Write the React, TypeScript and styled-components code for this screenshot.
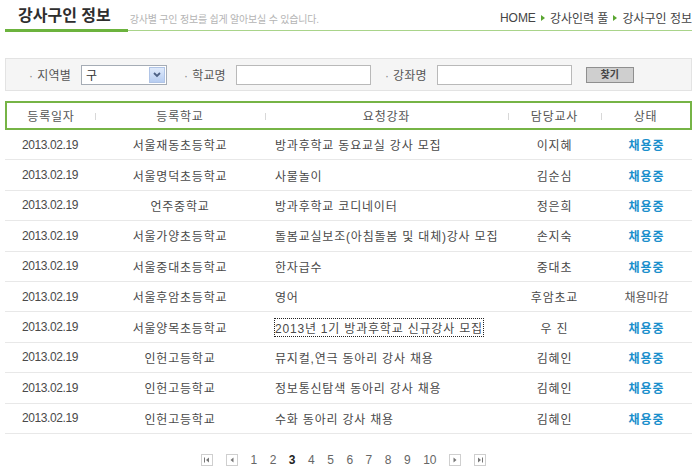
import React from 'react';
import styled, { createGlobalStyle } from 'styled-components';

const GlobalStyle = createGlobalStyle`
  body {
    margin: 0;
    background: #fff;
    font-family: "Liberation Sans", "Noto Sans CJK KR", sans-serif;
    font-size: 12px;
    color: #555;
  }
`;

const Page = styled.div`
  width: 700px;
  padding: 0 8px 0 5px;
  box-sizing: border-box;
`;

// Title bar with green underline
const Header = styled.div`
  display: flex;
  align-items: flex-end;
  height: 30px;
  border-bottom: 1px solid #a9d48a;
`;

const Title = styled.h1`
  margin: 0 0 -2px 0;
  padding: 0 17px 3px 13px;
  font-size: 16px;
  font-weight: bold;
  color: #2e2e2e;
  border-bottom: 3px solid #6cb33e;
  line-height: 20px;
`;

const SubTitle = styled.span`
  margin-left: 2px;
  padding-bottom: 4px;
  font-size: 10px;
  color: #b4b4b4;
  letter-spacing: -0.2px;
`;

const Breadcrumb = styled.div`
  margin-left: auto;
  align-self: flex-start;
  margin-top: 9px;
  display: flex;
  align-items: center;
  gap: 5px;
  color: #444;
  font-size: 12px;
`;

const Arrow = styled.span`
  width: 0;
  height: 0;
  border-top: 3px solid transparent;
  border-bottom: 3px solid transparent;
  border-left: 4px solid #5aa631;
`;

// search area
const SearchBox = styled.div`
  margin-top: 27px;
  height: 33px;
  display: flex;
  align-items: center;
  background: #f5f5f5;
  border: 1px solid #e3e3e3;
  box-sizing: border-box;
  padding-left: 23px;
`;

const Label = styled.span<{ $ml?: number }>`
  margin-left: ${(p) => p.$ml ?? 0}px;
  margin-right: 10px;
  color: #555;
  white-space: nowrap;
  letter-spacing: 0.2px;
  &::before {
    content: '·';
    margin-right: 4px;
    color: #888;
  }
`;

const FakeSelect = styled.div`
  width: 86px;
  height: 20px;
  box-sizing: border-box;
  border: 1px solid #a5acb5;
  background: #fff;
  display: flex;
  align-items: center;
  justify-content: space-between;
  padding-left: 4px;
  color: #333;
`;

const SelectBtn = styled.div`
  width: 16px;
  height: 16px;
  margin-right: 1px;
  background: linear-gradient(#dfeafb, #b7cdf1);
  border: 1px solid #b0c4e6;
  box-sizing: border-box;
  display: flex;
  align-items: center;
  justify-content: center;
`;

const TextInput = styled.input<{ $w: number }>`
  width: ${(p) => p.$w}px;
  height: 20px;
  box-sizing: border-box;
  border: 1px solid #b9b9b9;
  background: #fff;
  padding: 0 3px;
`;

const SearchButton = styled.button`
  margin-left: 14px;
  width: 48px;
  height: 16px;
  padding: 0;
  box-sizing: border-box;
  background: #cfcfcf;
  border: 1px solid #8f8f8f;
  font-family: inherit;
  font-size: 10px;
  font-weight: bold;
  color: #444;
  line-height: 14px;
`;

// table
const Grid = styled.div`
  display: grid;
  grid-template-columns: 90px 170px 243px 93px 1fr;
  margin-top: 10px;
`;

const HeadRow = styled.div`
  display: contents;
`;

const HeadCell = styled.div<{ $first?: boolean; $last?: boolean }>`
  position: relative;
  height: 29px;
  box-sizing: border-box;
  display: flex;
  align-items: center;
  justify-content: center;
  border-top: 2px solid #76b446;
  border-bottom: 2px solid #76b446;
  border-left: ${(p) => (p.$first ? '2px solid #76b446' : 'none')};
  border-right: ${(p) => (p.$last ? '2px solid #76b446' : 'none')};
  color: #555;
  font-size: 12px;
  letter-spacing: 0.8px;
  &::before {
    content: ${(p) => (p.$first ? 'none' : "''")};
    position: absolute;
    left: 0;
    top: 10px;
    width: 1px;
    height: 7px;
    background: #d8d8d8;
  }
`;

const Cell = styled.div<{ $align?: string; $pl?: number; $num?: boolean }>`
  height: 30.4px;
  box-sizing: border-box;
  border-bottom: 1px solid #e8e8e8;
  display: flex;
  align-items: center;
  justify-content: ${(p) => p.$align ?? 'center'};
  padding-left: ${(p) => p.$pl ?? 0}px;
  color: #4a4a4a;
  white-space: nowrap;
  letter-spacing: ${(p) => (p.$num ? '-0.4px' : '0.8px')};
`;

const Focused = styled.span`
  outline: 1px dotted #222;
  outline-offset: 0px;
`;

const Status = styled.span<{ $open: boolean }>`
  color: ${(p) => (p.$open ? '#1a8fcc' : '#555')};
  font-weight: ${(p) => (p.$open ? 'bold' : 'normal')};
  letter-spacing: ${(p) => (p.$open ? '1px' : '0')};
`;

// pager
const Pager = styled.div`
  display: flex;
  justify-content: center;
  align-items: center;
  margin-top: 19px;
  padding-right: 10px;
  gap: 12.5px;
`;

const PageBox = styled.span`
  width: 12px;
  height: 12px;
  box-sizing: border-box;
  border: 1px solid #cfcfcf;
  display: flex;
  align-items: center;
  justify-content: center;
`;

const PageNum = styled.span<{ $active?: boolean }>`
  font-size: 12px;
  color: ${(p) => (p.$active ? '#222' : '#666')};
  font-weight: ${(p) => (p.$active ? 'bold' : 'normal')};
`;

type Row = {
  date: string;
  school: string;
  course: string;
  teacher: string;
  open: boolean;
  focus?: boolean;
};

const rows: Row[] = [
  { date: '2013.02.19', school: '서울재동초등학교', course: '방과후학교 동요교실 강사 모집', teacher: '이지혜', open: true },
  { date: '2013.02.19', school: '서울명덕초등학교', course: '사물놀이', teacher: '김순심', open: true },
  { date: '2013.02.19', school: '언주중학교', course: '방과후학교 코디네이터', teacher: '정은희', open: true },
  { date: '2013.02.19', school: '서울가양초등학교', course: '돌봄교실보조(아침돌봄 및 대체)강사 모집', teacher: '손지숙', open: true },
  { date: '2013.02.19', school: '서울중대초등학교', course: '한자급수', teacher: '중대초', open: true },
  { date: '2013.02.19', school: '서울후암초등학교', course: '영어', teacher: '후암초교', open: false },
  { date: '2013.02.19', school: '서울양목초등학교', course: '2013년 1기 방과후학교 신규강사 모집', teacher: '우 진', open: true, focus: true },
  { date: '2013.02.19', school: '인헌고등학교', course: '뮤지컬,연극 동아리 강사 채용', teacher: '김혜인', open: true },
  { date: '2013.02.19', school: '인헌고등학교', course: '정보통신탐색 동아리 강사 채용', teacher: '김혜인', open: true },
  { date: '2013.02.19', school: '인헌고등학교', course: '수화 동아리 강사 채용', teacher: '김혜인', open: true },
];

const Tri: React.FC<{ dir: 'l' | 'r'; bar?: boolean }> = ({ dir, bar }) => (
  <svg width="8" height="6" viewBox="0 0 8 6">
    {dir === 'l' ? (
      <>
        {bar && <rect x="1" y="0.5" width="1" height="5" fill="#777" />}
        <polygon points={bar ? '6,0.5 3,3 6,5.5' : '5.5,0.5 2.5,3 5.5,5.5'} fill="#777" />
      </>
    ) : (
      <>
        <polygon points={bar ? '2,0.5 5,3 2,5.5' : '2.5,0.5 5.5,3 2.5,5.5'} fill="#777" />
        {bar && <rect x="6" y="0.5" width="1" height="5" fill="#777" />}
      </>
    )}
  </svg>
);

const App: React.FC = () => {
  return (
    <Page>
      <GlobalStyle />
      <Header>
        <Title>강사구인 정보</Title>
        <SubTitle>강사별 구인 정보를 쉽게 알아보실 수 있습니다.</SubTitle>
        <Breadcrumb>
          <span>HOME</span>
          <Arrow />
          <span>강사인력 풀</span>
          <Arrow />
          <span>강사구인 정보</span>
        </Breadcrumb>
      </Header>

      <SearchBox>
        <Label>지역별</Label>
        <FakeSelect>
          <span>구</span>
          <SelectBtn>
            <svg width="8" height="6" viewBox="0 0 8 6">
              <polyline points="1,1 4,4 7,1" fill="none" stroke="#4d6185" strokeWidth="1.8" />
            </svg>
          </SelectBtn>
        </FakeSelect>
        <Label $ml={17}>학교명</Label>
        <TextInput $w={135} />
        <Label $ml={14}>강좌명</Label>
        <TextInput $w={135} />
        <SearchButton>찾기</SearchButton>
      </SearchBox>

      <Grid>
        <HeadRow>
          <HeadCell $first>등록일자</HeadCell>
          <HeadCell>등록학교</HeadCell>
          <HeadCell>요청강좌</HeadCell>
          <HeadCell>담당교사</HeadCell>
          <HeadCell $last>상태</HeadCell>
        </HeadRow>
        {rows.map((r, i) => (
          <React.Fragment key={i}>
            <Cell $num>{r.date}</Cell>
            <Cell>{r.school}</Cell>
            <Cell $align="flex-start" $pl={10}>
              {r.focus ? <Focused>{r.course}</Focused> : r.course}
            </Cell>
            <Cell>{r.teacher}</Cell>
            <Cell>
              <Status $open={r.open}>{r.open ? '채용중' : '채용마감'}</Status>
            </Cell>
          </React.Fragment>
        ))}
      </Grid>

      <Pager>
        <PageBox><Tri dir="l" bar /></PageBox>
        <PageBox><Tri dir="l" /></PageBox>
        {[1, 2, 3, 4, 5, 6, 7, 8, 9, 10].map((n) => (
          <PageNum key={n} $active={n === 3}>{n}</PageNum>
        ))}
        <PageBox><Tri dir="r" /></PageBox>
        <PageBox><Tri dir="r" bar /></PageBox>
      </Pager>
    </Page>
  );
};

export default App;
